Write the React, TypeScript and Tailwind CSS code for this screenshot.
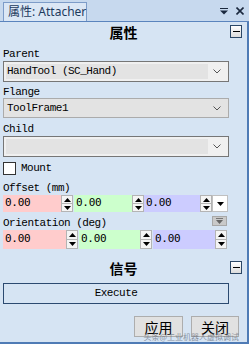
import React from "react";

const mono = "font-['Liberation_Mono',monospace] text-[11px] tracking-[-0.5px] text-black";

function Minus() {
  return (
    <div className="flex h-[13px] w-[12px] items-center justify-center border border-[#2b4766] bg-gradient-to-b from-white to-[#dcdcdc]">
      <div className="h-[1px] w-[7px] bg-black" />
    </div>
  );
}

function Header({ title }: { title: string }) {
  return (
    <div className="relative flex h-[14px] items-center justify-center">
      <span className="font-['Noto_Sans_CJK_SC',sans-serif] text-[14px] font-bold leading-none text-black">{title}</span>
      <div className="absolute right-[5px] top-0">
        <Minus />
      </div>
    </div>
  );
}

function Chevron() {
  return (
    <svg width="8" height="5" viewBox="0 0 8 5">
      <path d="M0.5 0.5 L4 4 L7.5 0.5" fill="none" stroke="#555" strokeWidth="1" />
    </svg>
  );
}

function Combo({ value, disabled, h }: { value?: string; disabled?: boolean; h: string }) {
  return (
    <div
      className={`mx-[3px] flex w-[226px] ${h} border p-[2px] ${
        disabled ? "border-[#ababab] bg-[#e3e3e3]" : "border-[#767676] bg-[#f0f0f0]"
      }`}
    >
      <div className={`flex flex-1 items-center bg-[#e3e3e3] pl-[1px] ${mono}`}>{value}</div>
      <div className="flex w-[18px] items-center justify-center">
        <Chevron />
      </div>
    </div>
  );
}

function Tri({ up, color = "#000" }: { up?: boolean; color?: string }) {
  return (
    <svg width="7" height="4" viewBox="0 0 7 4">
      <path d={up ? "M0 4 L3.5 0 L7 4 Z" : "M0 0 L7 0 L3.5 4 Z"} fill={color} />
    </svg>
  );
}

function Spin() {
  return (
    <div className="flex w-[12px] flex-col border border-[#b4b4b4] bg-[#f4f4f4]">
      <div className="flex flex-1 items-center justify-center border-b border-[#b4b4b4]">
        <Tri up />
      </div>
      <div className="flex flex-1 items-center justify-center">
        <Tri />
      </div>
    </div>
  );
}

function Field({ w, bg }: { w: string; bg: string }) {
  return (
    <div className={`flex ${w} items-center ${bg} pl-[2px] font-['DejaVu_Sans_Mono',monospace] text-[11px] tracking-[-0.3px] text-black`}>
      0.00
    </div>
  );
}

export default function App() {
  return (
    <div className="relative flex h-[344px] w-[249px] flex-col overflow-hidden bg-[#d6e4f3]">
      {/* title bar */}
      <div className="flex h-[22px] items-end border-b border-[#5b84bd] bg-[#c7d9ee]">
        <div className="ml-[3px] flex h-[19px] w-[84px] items-center whitespace-nowrap border border-b-0 border-[#7d9cc8] bg-[#dbe7f5] pl-[4px] font-['Noto_Sans','Noto_Sans_CJK_SC',sans-serif] text-[12px] text-[#1d3a5d]">
          属性: Attacher
        </div>
        <div className="ml-auto mb-[6px] mr-[5px] flex items-center gap-[8px]">
          <svg width="8" height="7" viewBox="0 0 8 7">
            <rect x="0" y="0" width="8" height="1" fill="#1b293e" />
            <path d="M0 2.5 L8 2.5 L4 6.5 Z" fill="#1b293e" />
          </svg>
          <svg width="8" height="8" viewBox="0 0 8 8">
            <path d="M0.5 0.5 L7.5 7.5 M7.5 0.5 L0.5 7.5" stroke="#1b293e" strokeWidth="1.6" />
          </svg>
        </div>
      </div>

      {/* body */}
      <div className="flex flex-1 flex-col border-b-2 border-r-2 border-[#4f7bb5]">
        <div className="mt-[3px]">
          <Header title="属性" />
        </div>

        <div className={`ml-[3px] mt-[9px] h-[12px] leading-[12px] ${mono}`}>Parent</div>
        <div className="mt-[1px]">
          <Combo value="HandTool (SC_Hand)" h="h-[21px]" />
        </div>

        <div className={`ml-[3px] mt-[4px] h-[12px] leading-[12px] ${mono}`}>Flange</div>
        <div>
          <Combo value="ToolFrame1" disabled h="h-[20px]" />
        </div>

        <div className={`ml-[3px] mt-[5px] h-[12px] leading-[12px] ${mono}`}>Child</div>
        <div className="mt-[1px]">
          <Combo h="h-[21px]" />
        </div>

        <div className="ml-[3px] mt-[5px] flex h-[13px] items-center gap-[5px]">
          <div className="h-[13px] w-[13px] border border-[#333] bg-white" />
          <span className={mono}>Mount</span>
        </div>

        <div className={`ml-[3px] mt-[7px] h-[12px] leading-[12px] ${mono}`}>Offset (mm)</div>
        <div className="ml-[3px] mt-[1px] flex h-[17px]">
          <Field w="w-[58px]" bg="bg-[#ffcccc]" />
          <Spin />
          <div className="w-[1px]" />
          <Field w="w-[58px]" bg="bg-[#ccffcc]" />
          <Spin />
          <Field w="w-[56px]" bg="bg-[#ccccff]" />
          <Spin />
          <div className="flex w-[16px] items-center justify-center border border-[#c0c0c0] bg-white">
            <Tri />
          </div>
        </div>

        <div className="ml-[3px] mr-[20px] mt-[4px] flex h-[13px] items-start justify-between">
          <span className={`mt-[1px] leading-[12px] ${mono}`}>Orientation (deg)</span>
          <div className="flex h-[10px] w-[15px] flex-col items-center justify-center border border-[#a8a8a8] bg-[#c9c9c9]">
            <div className="mb-[1px] h-[1px] w-[7px] bg-[#777]" />
            <Tri color="#666" />
          </div>
        </div>
        <div className="ml-[3px] mt-[1px] flex h-[19px]">
          <Field w="w-[63px]" bg="bg-[#ffcccc]" />
          <Spin />
          <div className="w-[1px]" />
          <Field w="w-[61px]" bg="bg-[#ccffcc]" />
          <Spin />
          <div className="w-[1px]" />
          <Field w="w-[62px]" bg="bg-[#ccccff]" />
          <Spin />
        </div>

        <div className="mt-[12px]">
          <Header title="信号" />
        </div>

        <div className={`mx-[3px] mt-[8px] flex h-[21px] w-[226px] items-center justify-center border border-[#2c4a70] ${mono}`}>
          Execute
        </div>

        <div className="mt-[12px] flex gap-[8px] pl-[134px]">
          <div className="flex h-[21px] w-[49px] items-center justify-center border border-[#adadad] bg-[#e1e1e1] font-['Noto_Sans_CJK_SC',sans-serif] text-[14px] leading-none text-black">
            应用
          </div>
          <div className="flex h-[21px] w-[48px] items-center justify-center border border-[#adadad] bg-[#e1e1e1] font-['Noto_Sans_CJK_SC',sans-serif] text-[14px] leading-none text-black">
            关闭
          </div>
        </div>
      </div>

      <div className="absolute bottom-[3px] right-[10px] font-['Noto_Sans_CJK_SC',sans-serif] text-[8px] leading-none text-[#6b7280] opacity-70">
        头条@工业机器人虚拟调试
      </div>
    </div>
  );
}
